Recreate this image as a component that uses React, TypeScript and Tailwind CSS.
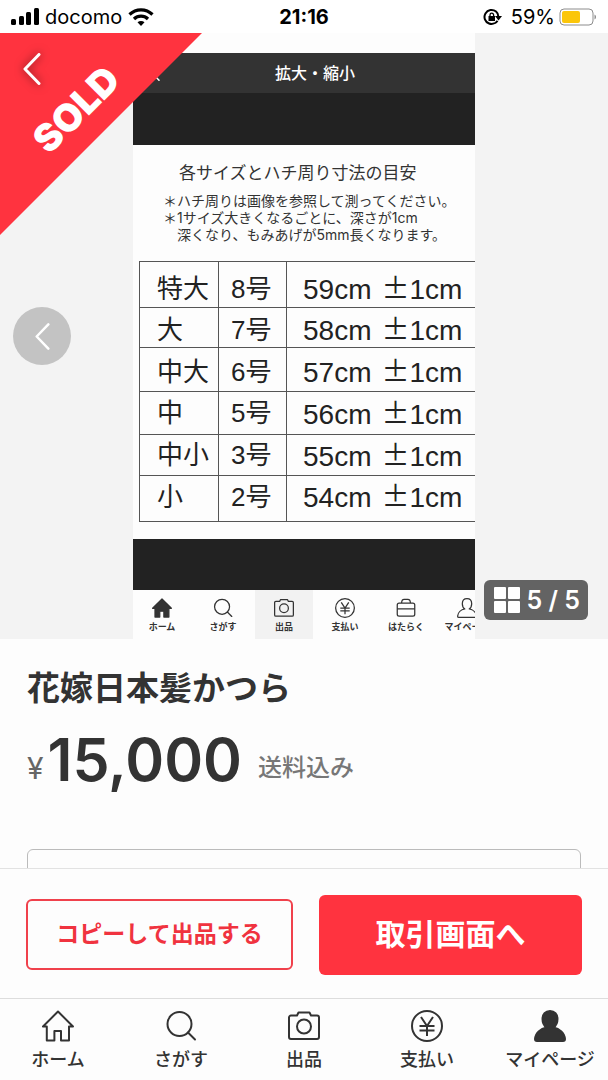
import type { ReactNode } from "react";
import clsx from "clsx";

interface IconProps {
  className?: string;
  filled?: boolean;
}

function HomeIcon({ className, filled }: IconProps) {
  return (
    <svg
      viewBox="0 0 32 32"
      className={className}
      fill={filled ? "currentColor" : "none"}
      stroke="currentColor"
      strokeWidth="2"
      strokeLinejoin="round"
      strokeLinecap="round"
      aria-hidden="true"
    >
      <path d="M16 1.5 1 16.5h3.8v14h7.6V21h6.6v9.500h8V16.500H31Z" />
    </svg>
  );
}

function SearchIcon({ className }: IconProps) {
  return (
    <svg
      viewBox="0 0 32 32"
      className={className}
      fill="none"
      stroke="currentColor"
      strokeWidth="2"
      strokeLinecap="round"
      aria-hidden="true"
    >
      <circle cx="14.500" cy="14" r="12" />
      <path d="m23 22.500 7 7" />
    </svg>
  );
}

function CameraIcon({ className }: IconProps) {
  return (
    <svg
      viewBox="0 0 32 32"
      className={className}
      fill="none"
      stroke="currentColor"
      strokeWidth="2"
      strokeLinejoin="round"
      aria-hidden="true"
    >
      <path d="M3 5.500h6L10.500 2.500h11L23 5.500h6a2 2 0 0 1 2 2V27a2 2 0 0 1-2 2H3a2 2 0 0 1-2-2V7.500a2 2 0 0 1 2-2Z" />
      <circle cx="16" cy="16.500" r="7" />
    </svg>
  );
}

function YenIcon({ className }: IconProps) {
  return (
    <svg
      viewBox="0 0 32 32"
      className={className}
      fill="none"
      stroke="currentColor"
      strokeWidth="2"
      aria-hidden="true"
    >
      <circle cx="16" cy="16" r="15" />
      <path d="m10 7 6 9 6-9M16 16v10M8.500 16h15M8.500 20.500h15" />
    </svg>
  );
}

function BagIcon({ className }: IconProps) {
  return (
    <svg
      viewBox="0 0 32 32"
      className={className}
      fill="none"
      stroke="currentColor"
      strokeWidth="2"
      strokeLinejoin="round"
      aria-hidden="true"
    >
      <rect x="2" y="8" width="28" height="21" rx="3" />
      <path d="M9 8c0-4 2-6 4-6h6c2 0 4 2 4 6M2 17.500h28" />
    </svg>
  );
}

function PersonIcon({ className, filled }: IconProps) {
  return (
    <svg
      viewBox="0 0 32 32"
      className={className}
      fill={filled ? "currentColor" : "none"}
      stroke="currentColor"
      strokeWidth="2"
      strokeLinejoin="round"
      aria-hidden="true"
    >
      <path d="M16 1c-4.600 0-7.500 3.200-7.500 8 0 3.800 1.500 6.800 4 8.500C6.500 18.500 1.500 23 1 29c0 1.300.7 2 2 2h26c1.300 0 2-.7 2-2-.5-6-5.500-10.500-11.500-11.500 2.500-1.700 4-4.700 4-8.500 0-4.800-2.900-8-7.500-8Z" />
    </svg>
  );
}

function ChevronIcon({ className }: IconProps) {
  return (
    <svg
      viewBox="0 0 18 32"
      className={className}
      fill="none"
      stroke="currentColor"
      strokeWidth="3"
      strokeLinecap="round"
      strokeLinejoin="round"
      aria-hidden="true"
    >
      <path d="M16 1.500 2 16l14 14.500" />
    </svg>
  );
}

function StatusBar() {
  return (
    <header className="grid h-[33px] shrink-0 grid-cols-3 items-center bg-white px-[11px] text-black">
      <div className="flex items-center gap-1.5">
        <svg width="28" height="18" viewBox="0 0 28 18" aria-hidden="true">
          <rect x="0" y="11" width="5" height="6" rx="1.500" />
          <rect x="8" y="8" width="5" height="9" rx="1.500" />
          <rect x="15" y="4" width="5" height="13" rx="1.500" />
          <rect x="23" y="0" width="5" height="17" rx="1.500" />
        </svg>
        <span className="text-xl leading-6">docomo</span>
        <svg
          width="26"
          height="18"
          viewBox="0 0 26 18"
          fill="none"
          stroke="currentColor"
          strokeWidth="3.200"
          aria-hidden="true"
        >
          <path d="M1.500 6.500C8 .2 18 .2 24.500 6.500" />
          <path d="M6 11c4-3.800 10-3.800 14 0" />
          <path
            d="M9.500 14.300c2-1.800 5-1.800 7 0L13 18Z"
            fill="currentColor"
            stroke="none"
          />
        </svg>
      </div>
      <span className="text-center text-xl leading-6 font-bold">21:16</span>
      <div className="flex items-center justify-end gap-1">
        <svg
          width="20"
          height="18"
          viewBox="0 0 20 18"
          fill="none"
          stroke="currentColor"
          strokeWidth="2"
          className="mr-1"
          aria-hidden="true"
        >
          <path d="M15.500 9A7 7 0 1 0 12 15" />
          <path d="M12 15.200a7 7 0 0 0 2.500-2.500" />
          <path d="M12 8h7l-3.500 4.500Z" fill="currentColor" stroke="none" />
          <rect x="5.500" y="8" width="6.500" height="5" fill="currentColor" stroke="none" />
          <path d="M7 8.500V7a1.800 1.800 0 0 1 3.600 0v1.500" strokeWidth="1.300" />
        </svg>
        <span className="text-xl leading-6">59%</span>
        <svg width="38" height="18" viewBox="0 0 38 18" aria-hidden="true">
          <rect x="1" y="1" width="33" height="16" rx="4" fill="none" stroke="#8c8c8c" />
          <rect x="3" y="3" width="18" height="12" rx="2" fill="#fbc60a" />
          <path d="M35.500 6.500c2 .8 2 4.200 0 5Z" fill="#8c8c8c" />
        </svg>
      </div>
    </header>
  );
}

const sizes = [
  { name: "特大", no: "8", length: "59cm", row: "h-[46px]", cell: "pt-2" },
  { name: "大", no: "7", length: "58cm", row: "h-[40px]", cell: "pt-1" },
  { name: "中大", no: "6", length: "57cm", row: "h-[44px]", cell: "pt-1" },
  { name: "中", no: "5", length: "56cm", row: "h-[43px]", cell: "" },
  { name: "中小", no: "3", length: "55cm", row: "h-[41px]", cell: "" },
  { name: "小", no: "2", length: "54cm", row: "h-[46px]", cell: "pb-1" },
];

function SizeTable() {
  return (
    <table className="ml-1.5 w-[358px] table-fixed border-collapse text-[26px] leading-8 text-[#222]">
      <colgroup>
        <col className="w-[79px]" />
        <col className="w-[68px]" />
        <col />
      </colgroup>
      <tbody>
        {sizes.map((size) => (
          <tr key={size.no} className={size.row}>
            <th
              scope="row"
              className={clsx("border border-[#555] p-0 pl-[17px] text-left font-normal", size.cell)}
            >
              {size.name}
            </th>
            <td className={clsx("border border-[#555] p-0 pl-3", size.cell)}>
              <span className="font-['Liberation_Sans']">{size.no}</span>号
            </td>
            <td
              className={clsx(
                "border border-[#555] p-0 pl-4 font-['Liberation_Sans','Noto_Sans_CJK_JP',sans-serif] text-[28px]",
                size.cell,
              )}
            >
              <div className="flex items-baseline gap-2.5">
                <span>{size.length}</span>
                <span>
                  <span className="font-['Noto_Sans_CJK_JP']">±</span>1cm
                </span>
              </div>
            </td>
          </tr>
        ))}
      </tbody>
    </table>
  );
}

const slideTabs = [
  { label: "ホーム", icon: <HomeIcon filled className="size-5" /> },
  { label: "さがす", icon: <SearchIcon className="size-5" /> },
  { label: "出品", icon: <CameraIcon className="size-5" />, active: true },
  { label: "支払い", icon: <YenIcon className="size-5" /> },
  { label: "はたらく", icon: <BagIcon className="size-5" /> },
  { label: "マイページ", icon: <PersonIcon className="size-5" /> },
];

function Slide() {
  return (
    <div className="w-[342px] overflow-hidden bg-[#fdfdfd] pt-5">
      <div className="w-[364px]">
        <div className="grid h-10 grid-cols-3 items-center bg-[#333] text-white">
          <ChevronIcon className="ml-[18px] h-4 w-[9px]" />
          <p className="text-center text-base leading-6 font-medium">拡大・縮小</p>
        </div>
        <div className="h-[52px] bg-[#222]" />
        <div className="h-[394px] pt-4 text-[#333]">
          <p className="pl-[46px] text-[17px] leading-6">各サイズとハチ周り寸法の目安</p>
          <div className="mt-[7px] mb-[18px] pl-[30px] text-sm leading-[17px] whitespace-pre">
            <p>＊ハチ周りは画像を参照して測ってください。</p>
            <p>＊1サイズ大きくなるごとに、深さが1cm</p>
            <p>　深くなり、もみあげが5mm長くなります。</p>
          </div>
          <SizeTable />
        </div>
        <div className="h-[51px] bg-[#222]" />
        <ul className="flex h-[49px] gap-[3px]">
          {slideTabs.map((tab) => (
            <li
              key={tab.label}
              className={clsx(
                "flex w-[58px] shrink-0 flex-col items-center gap-[3px] pt-2 text-[#333]",
                tab.active && "bg-[#f2f2f2]",
              )}
            >
              {tab.icon}
              <span className="text-[9px] leading-3 font-bold whitespace-nowrap">{tab.label}</span>
            </li>
          ))}
        </ul>
      </div>
    </div>
  );
}

function Gallery() {
  return (
    <section className="relative flex justify-center bg-[#f3f3f3]">
      <Slide />

      <div className="absolute top-0 left-0 size-[202px] bg-[#ff333f] [clip-path:polygon(0_0,100%_0,0_100%)]">
        <div className="flex size-[152px] items-center justify-center">
          <span className="-rotate-45 text-[38px] leading-none font-black text-white">
            SOLD
          </span>
        </div>
      </div>

      <button
        type="button"
        aria-label="戻る"
        className="absolute top-5 left-[23px] text-white drop-shadow-[0_0_5px_rgba(0,0,0,0.6)]"
      >
        <ChevronIcon className="h-8 w-[18px]" />
      </button>

      <button
        type="button"
        aria-label="前の画像"
        className="absolute top-1/2 left-[13px] flex size-[58px] -translate-y-1/2 items-center justify-center rounded-full bg-[#c3c3c3] text-white"
      >
        <ChevronIcon className="h-[27px] w-[15px]" />
      </button>

      <button
        type="button"
        className="absolute right-5 bottom-[19px] flex h-10 items-center gap-1.5 rounded-md bg-[#636363] px-2 pl-2.5 text-white"
      >
        <svg width="26" height="26" viewBox="0 0 26 26" fill="currentColor" aria-hidden="true">
          <rect width="12" height="12" rx="1" />
          <rect x="14" width="12" height="12" rx="1" />
          <rect y="14" width="12" height="12" rx="1" />
          <rect x="14" y="14" width="12" height="12" rx="1" />
        </svg>
        <span className="text-[25px] leading-8 font-semibold">5 / 5</span>
      </button>
    </section>
  );
}

interface TabProps {
  label: string;
  icon: ReactNode;
  current?: boolean;
}

const tabs: TabProps[] = [
  { label: "ホーム", icon: <HomeIcon className="size-8" /> },
  { label: "さがす", icon: <SearchIcon className="size-8" /> },
  { label: "出品", icon: <CameraIcon className="size-8" /> },
  { label: "支払い", icon: <YenIcon className="size-8" /> },
  { label: "マイページ", icon: <PersonIcon filled className="size-8" />, current: true },
];

function Tab({ label, icon, current }: TabProps) {
  return (
    <a
      href="#"
      aria-current={current ? "page" : undefined}
      className="flex w-[90px] flex-col items-center gap-1.5 text-lg leading-6 font-medium whitespace-nowrap text-[#333]"
    >
      {icon}
      {label}
    </a>
  );
}

export default function App() {
  return (
    <div className="flex h-screen flex-col overflow-hidden bg-[#fdfdfd] font-['Inter','Noto_Sans_CJK_JP',sans-serif] text-[#333]">
      <StatusBar />

      <main className="min-h-0 flex-1 overflow-hidden">
        <Gallery />
        <div className="px-[27px] pt-[29px]">
          <h1 className="text-[33px] leading-10 font-bold">花嫁日本髪かつら</h1>
          <p className="mt-7 flex items-end">
            <span className="text-[30px] leading-8 text-[#666]">¥</span>
            <span className="ml-1 text-[59px] leading-[48px] font-semibold">15,000</span>
            <span className="ml-4 text-2xl leading-8 font-medium text-[#777]">送料込み</span>
          </p>
          <div className="mt-[65px] h-24 rounded-md border border-[#bbb]" />
        </div>
      </main>

      <footer className="shrink-0">
        <div className="flex h-[130px] items-center gap-[26px] border-t border-[#e2e2e2] px-[26px] pt-0.5">
          <button
            type="button"
            className="h-[71px] flex-1 rounded-md border-2 border-[#f0414c] text-[23px] font-bold text-[#f0333f]"
          >
            コピーして出品する
          </button>
          <button
            type="button"
            className="h-20 flex-1 rounded-md bg-[#ff333f] text-[30px] font-bold text-white"
          >
            取引画面へ
          </button>
        </div>
        <nav className="flex h-[82px] justify-between border-t border-[#ddd] px-[13px] pt-[11px]">
          {tabs.map((tab) => (
            <Tab key={tab.label} {...tab} />
          ))}
        </nav>
      </footer>
    </div>
  );
}
